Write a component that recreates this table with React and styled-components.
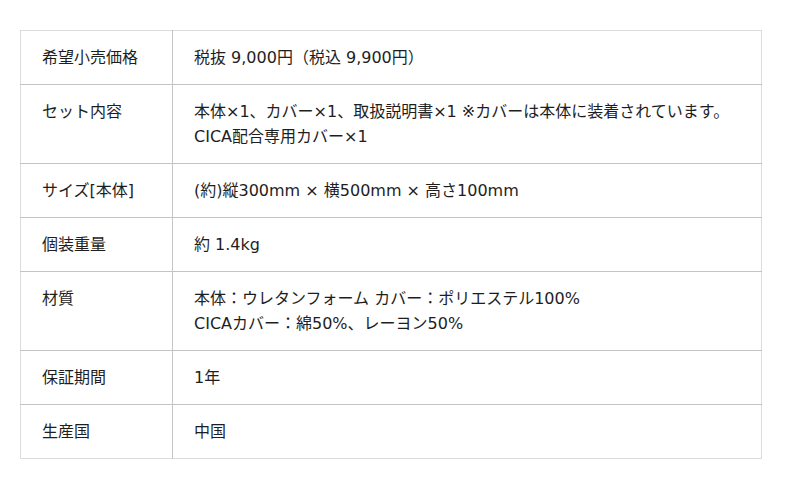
import React from 'react';
import styled, { createGlobalStyle } from 'styled-components';

const GlobalStyle = createGlobalStyle`
  body {
    margin: 0;
    background: #fff;
    font-family: "DejaVu Sans", "Noto Sans CJK JP", sans-serif;
  }
`;

const Page = styled.div`
  padding: 30px 38px 30px 20px;
`;

const SpecTable = styled.table`
  width: 742px;
  table-layout: fixed;
  border-collapse: collapse;
  border: 1px solid #dcdcdc;
  font-size: 16px;
  line-height: 25px;
  color: #1e1e1e;
`;

const LabelCol = styled.col`
  width: 152px;
`;

const Row = styled.tr`
  border-bottom: 1px solid #c4c4c4;

  &:last-child {
    border-bottom: 1px solid #dcdcdc;
  }
`;

const Label = styled.th`
  padding: 14px 10px 14px 21px;
  text-align: left;
  vertical-align: top;
  font-weight: normal;
  border-right: 1px solid #c4c4c4;
`;

const Value = styled.td`
  padding: 14px 10px 14px 21px;
  vertical-align: top;
`;

const specs = [
  { label: '希望小売価格', lines: ['税抜 9,000円（税込 9,900円）'] },
  {
    label: 'セット内容',
    lines: ['本体×1、カバー×1、取扱説明書×1 ※カバーは本体に装着されています。', 'CICA配合専用カバー×1'],
  },
  { label: 'サイズ[本体]', lines: ['(約)縦300mm × 横500mm × 高さ100mm'] },
  { label: '個装重量', lines: ['約 1.4kg'] },
  {
    label: '材質',
    lines: ['本体：ウレタンフォーム カバー：ポリエステル100%', 'CICAカバー：綿50%、レーヨン50%'],
  },
  { label: '保証期間', lines: ['1年'] },
  { label: '生産国', lines: ['中国'] },
];

const App = () => (
  <Page>
    <GlobalStyle />
    <SpecTable>
      <colgroup>
        <LabelCol />
        <col />
      </colgroup>
      <tbody>
        {specs.map((s) => (
          <Row key={s.label}>
            <Label>{s.label}</Label>
            <Value>
              {s.lines.map((l, i) => (
                <div key={i}>{l}</div>
              ))}
            </Value>
          </Row>
        ))}
      </tbody>
    </SpecTable>
  </Page>
);

export default App;
